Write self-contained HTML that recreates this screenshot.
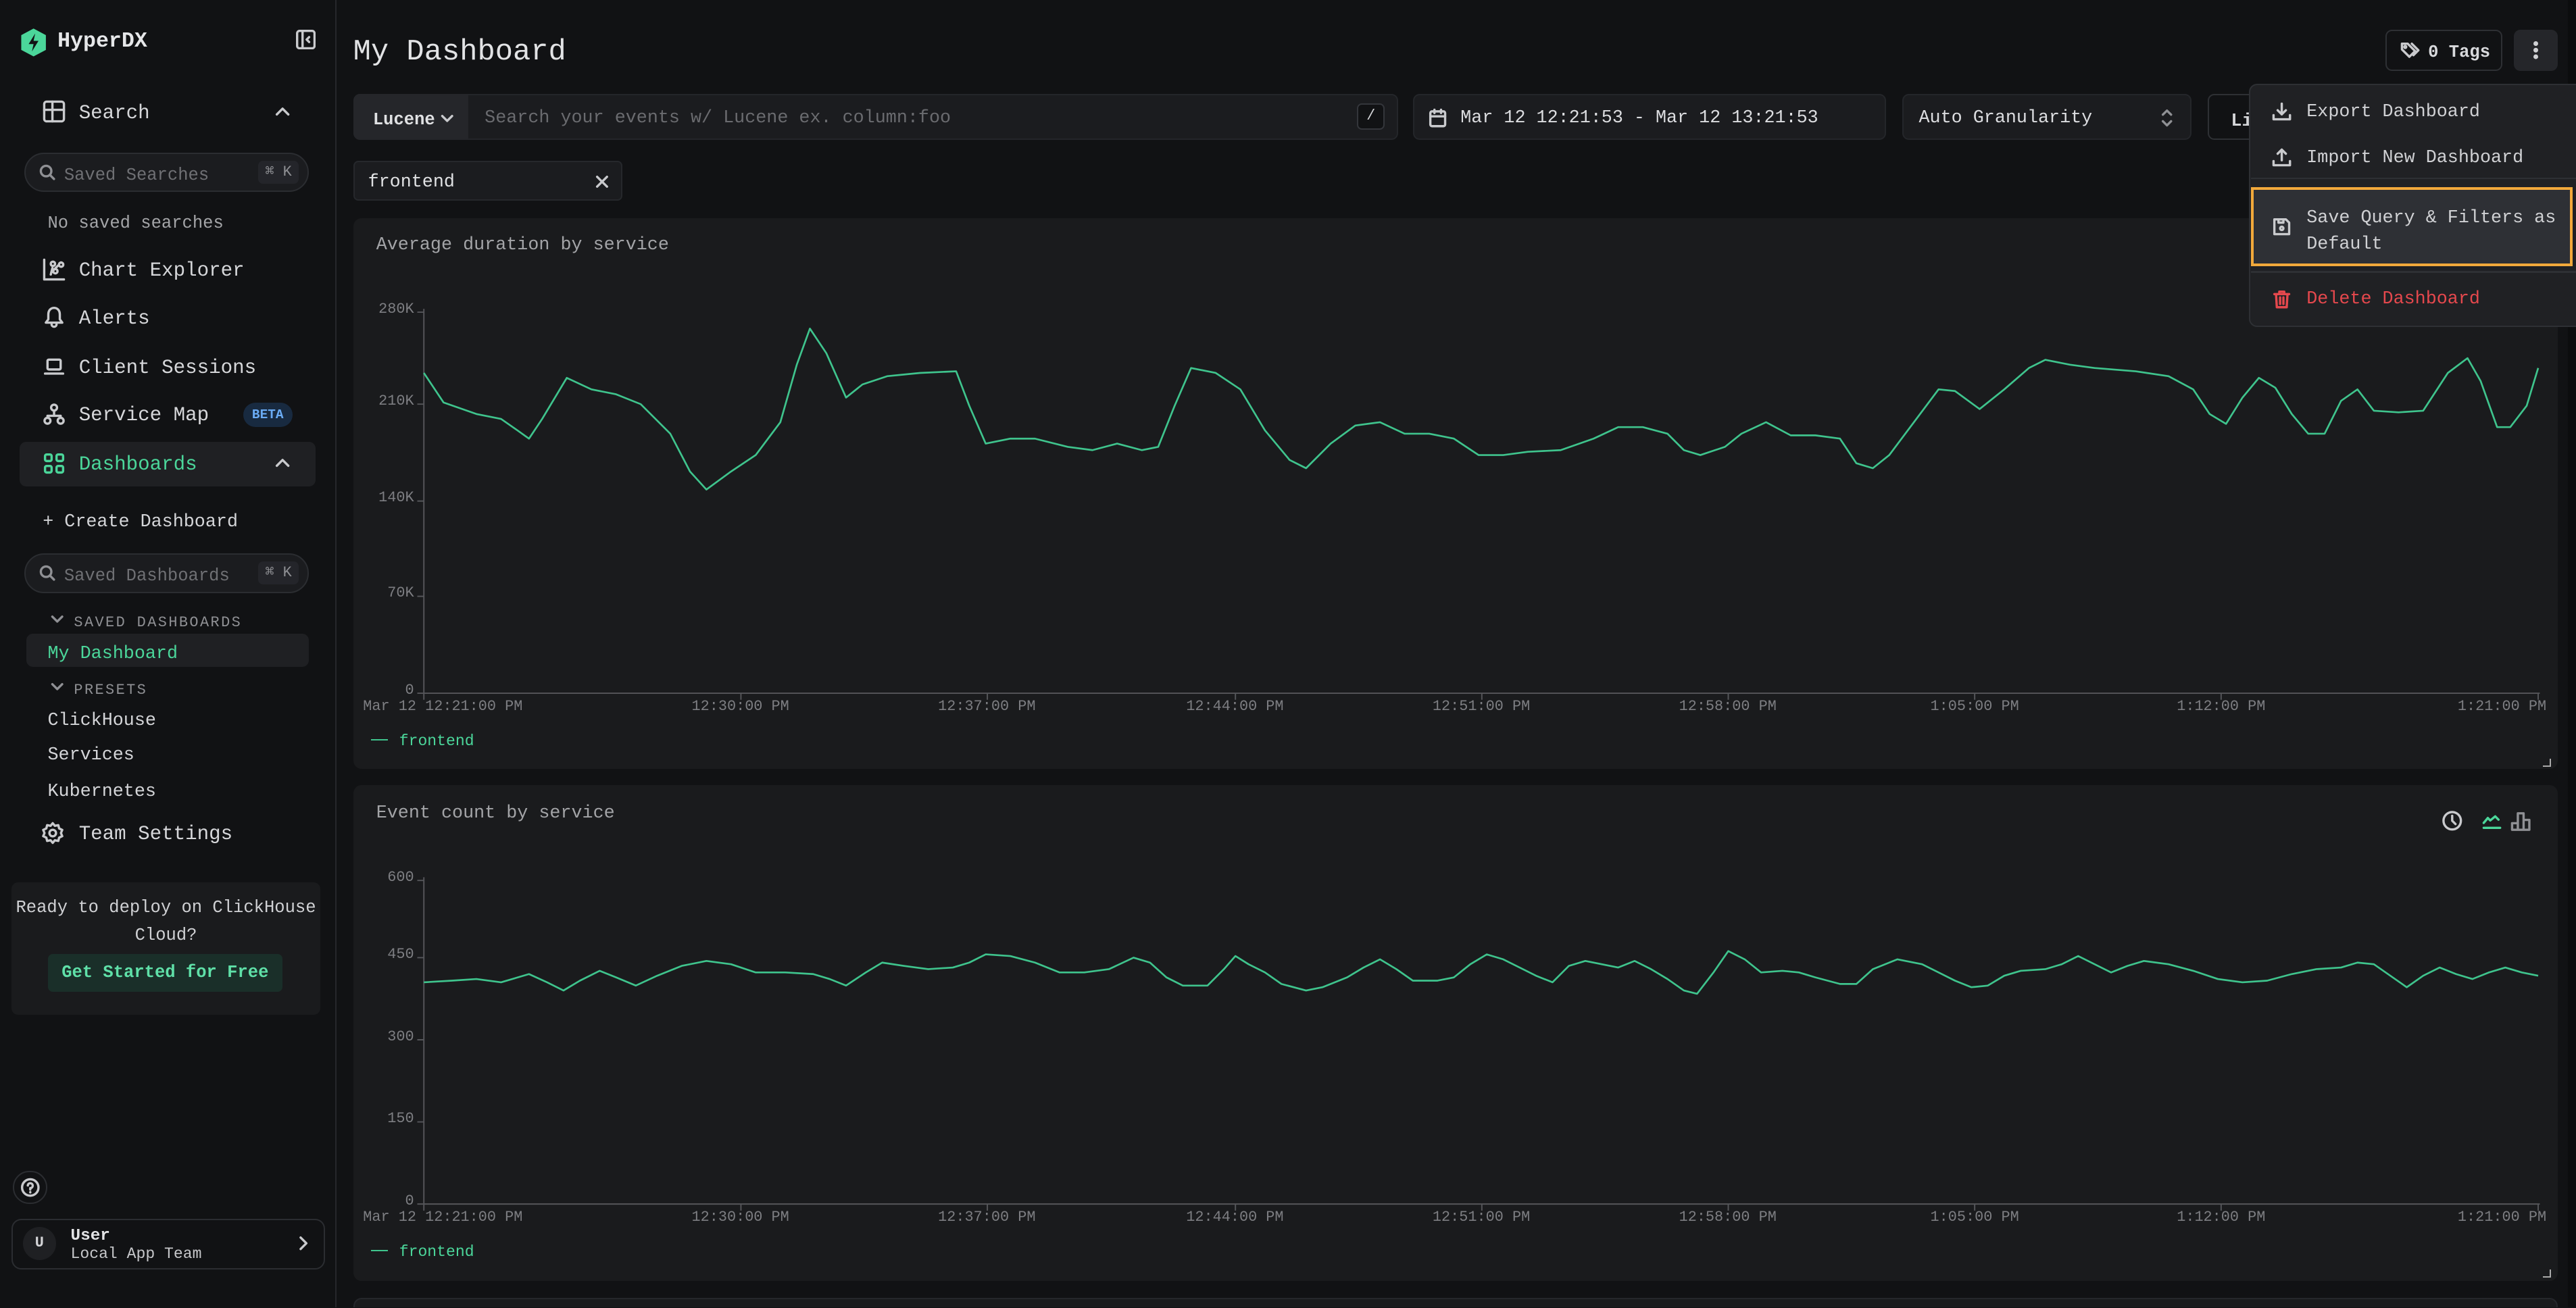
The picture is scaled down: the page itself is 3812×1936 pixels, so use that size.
<!DOCTYPE html>
<html><head><meta charset="utf-8"><style>
*{box-sizing:border-box;margin:0;padding:0}
html,body{width:3812px;height:1936px;overflow:hidden;background:#111214}
#w{position:absolute;left:0;top:0;width:1568px;height:796px;zoom:2.4311;background:#111214;font-family:"Liberation Mono",monospace;color:#d4d5d8;overflow:hidden}
.a{position:absolute;white-space:nowrap}
.a:not([style*="background"]):not([style*="border"]){margin-top:2px}
.t{font-size:11.5px;line-height:14px}
.nav{font-size:12px;color:#d6d7da}
.ic{position:absolute;fill:none;stroke:#c9cacd;stroke-width:1.4;stroke-linecap:round;stroke-linejoin:round}
.panel{position:absolute;background:#1a1b1d;border-radius:5px}
.ax{font-size:9px;color:#7d7e82;position:absolute;white-space:nowrap}
.muted{color:#8f9094}
</style></head><body><div id="w">
<!-- sidebar -->
<div class="a" style="left:204px;top:0;width:1px;height:796px;background:#26272b"></div>
<svg class="a" style="left:12px;top:15px" width="17" height="18" viewBox="0 0 17 18"><path d="M8.5 0.5L16 4.5V13.5L8.5 17.5L1 13.5V4.5Z" fill="#4bd69a"/><path d="M9.5 3.5L5.5 10H8.5L7.5 14.5L11.5 8H8.5Z" fill="#111214"/></svg>
<div class="a" style="left:35px;top:16px;font-size:13px;font-weight:bold;color:#e6e7e9">HyperDX</div>
<svg class="ic" style="left:180px;top:18px" width="12" height="12" viewBox="0 0 12 12"><rect x="0.7" y="0.7" width="10.6" height="10.6" rx="1.5"/><path d="M4 1V11M8 4.5L6.5 6L8 7.5"/></svg>

<svg class="ic" style="left:26px;top:61px" width="14" height="14" viewBox="0 0 14 14"><rect x="1" y="1" width="12" height="12" rx="1.5"/><path d="M1 6H13M6 1V13"/></svg>
<div class="a nav" style="left:48px;top:60px">Search</div>
<svg class="ic" style="left:167px;top:64px" width="10" height="8" viewBox="0 0 10 8"><path d="M1.5 5.5L5 2L8.5 5.5"/></svg>
<div class="a" style="left:15px;top:93px;width:173px;height:24px;border-radius:12px;background:#1b1c1f;border:1px solid #2b2d31"></div>
<svg class="ic" style="left:24px;top:100px;stroke:#8f9094" width="10" height="10" viewBox="0 0 10 10"><circle cx="4.2" cy="4.2" r="3.2"/><path d="M6.6 6.6L9 9"/></svg>
<div class="a t muted" style="left:39px;top:98px;font-size:10.5px;color:#6f7074">Saved Searches</div>
<div class="a" style="left:157px;top:98px;width:25px;height:14px;background:#24252a;border-radius:3px;font-size:9px;color:#8f9094;text-align:center;line-height:14px">⌘ K</div>
<div class="a t muted" style="left:29px;top:127px;font-size:10.5px;color:#a4a5a8">No saved searches</div>

<svg class="ic" style="left:26px;top:157px" width="14" height="14" viewBox="0 0 14 14"><path d="M1 1V13H13M5 10L6 6M5 3.5A1.3 1.3 0 1 0 5 3.49M10 4A1.3 1.3 0 1 0 10 3.99M6.5 8A1.3 1.3 0 1 0 6.5 7.99M7 7L9.5 4.5"/></svg>
<div class="a nav" style="left:48px;top:156px">Chart Explorer</div>
<svg class="ic" style="left:26px;top:186px" width="14" height="14" viewBox="0 0 14 14"><path d="M7 1.5C4.8 1.5 3.5 3.3 3.5 5.5V8.5L2 10.5H12L10.5 8.5V5.5C10.5 3.3 9.2 1.5 7 1.5ZM5.5 11.5A1.5 1.5 0 0 0 8.5 11.5"/></svg>
<div class="a nav" style="left:48px;top:185px">Alerts</div>
<svg class="ic" style="left:26px;top:216px" width="14" height="14" viewBox="0 0 14 14"><rect x="3" y="3" width="8" height="6" rx="0.8"/><path d="M1.5 11.5H12.5"/></svg>
<div class="a nav" style="left:48px;top:215px">Client Sessions</div>
<svg class="ic" style="left:26px;top:245px" width="14" height="14" viewBox="0 0 14 14"><circle cx="7" cy="3" r="1.8"/><circle cx="3" cy="11" r="1.8"/><circle cx="11" cy="11" r="1.8"/><path d="M7 5V7M3 9.2V8H11V9.2"/></svg>
<div class="a nav" style="left:48px;top:244px">Service Map</div>
<div class="a" style="left:148px;top:245px;width:30px;height:15px;border-radius:8px;background:#182a40;color:#6aabf4;font-size:8px;font-weight:bold;text-align:center;line-height:15px">BETA</div>

<div class="a" style="left:12px;top:269px;width:180px;height:27px;border-radius:4px;background:#1f2023"></div>
<svg class="ic" style="left:26px;top:275px;stroke:#4bd69a" width="14" height="14" viewBox="0 0 14 14"><rect x="1.5" y="1.5" width="4" height="4" rx="1"/><rect x="8.5" y="1.5" width="4" height="4" rx="1"/><rect x="1.5" y="8.5" width="4" height="4" rx="1"/><rect x="8.5" y="8.5" width="4" height="4" rx="1"/></svg>
<div class="a nav" style="left:48px;top:274px;color:#4bd69a">Dashboards</div>
<svg class="ic" style="left:167px;top:278px" width="10" height="8" viewBox="0 0 10 8"><path d="M1.5 5.5L5 2L8.5 5.5"/></svg>
<div class="a t" style="left:26px;top:309px;font-size:11px">+ Create Dashboard</div>
<div class="a" style="left:15px;top:337px;width:173px;height:24px;border-radius:12px;background:#1b1c1f;border:1px solid #2b2d31"></div>
<svg class="ic" style="left:24px;top:344px;stroke:#8f9094" width="10" height="10" viewBox="0 0 10 10"><circle cx="4.2" cy="4.2" r="3.2"/><path d="M6.6 6.6L9 9"/></svg>
<div class="a t" style="left:39px;top:342px;font-size:10.5px;color:#6f7074">Saved Dashboards</div>
<div class="a" style="left:157px;top:342px;width:25px;height:14px;background:#24252a;border-radius:3px;font-size:9px;color:#8f9094;text-align:center;line-height:14px">⌘ K</div>
<svg class="ic" style="left:31px;top:374px;stroke:#8f9094" width="8" height="6" viewBox="0 0 8 6"><path d="M1 1.5L4 4.5L7 1.5"/></svg>
<div class="a" style="left:45px;top:372px;font-size:9px;letter-spacing:1px;color:#8f9094">SAVED DASHBOARDS</div>
<div class="a" style="left:16px;top:386px;width:172px;height:20px;border-radius:4px;background:#1f2023"></div>
<div class="a t" style="left:29px;top:389px;font-size:11px;color:#4bd69a">My Dashboard</div>
<svg class="ic" style="left:31px;top:415px;stroke:#8f9094" width="8" height="6" viewBox="0 0 8 6"><path d="M1 1.5L4 4.5L7 1.5"/></svg>
<div class="a" style="left:45px;top:413px;font-size:9px;letter-spacing:1px;color:#8f9094">PRESETS</div>
<div class="a t" style="left:29px;top:430px;font-size:11px">ClickHouse</div>
<div class="a t" style="left:29px;top:451px;font-size:11px">Services</div>
<div class="a t" style="left:29px;top:473px;font-size:11px">Kubernetes</div>
<svg class="ic" style="left:25px;top:500px" width="14" height="14" viewBox="0 0 14 14"><circle cx="7" cy="7" r="2"/><path d="M7 1L8.3 2.6L10.4 2.2L10.9 4.2L12.8 5.1L12 7L12.8 8.9L10.9 9.8L10.4 11.8L8.3 11.4L7 13L5.7 11.4L3.6 11.8L3.1 9.8L1.2 8.9L2 7L1.2 5.1L3.1 4.2L3.6 2.2L5.7 2.6Z"/></svg>
<div class="a nav" style="left:48px;top:499px">Team Settings</div>

<div class="a" style="left:7px;top:537px;width:188px;height:81px;border-radius:4px;background:#1a1b1d"></div>
<div class="a" style="left:7px;top:542px;width:188px;text-align:center;font-size:10.5px;line-height:17px;white-space:normal;color:#d0d1d4">Ready to deploy on ClickHouse Cloud?</div>
<div class="a" style="left:29px;top:581px;width:143px;height:23px;border-radius:3px;background:#1a2f29;color:#5fe0a8;font-size:10.5px;font-weight:bold;text-align:center;line-height:23px">Get Started for Free</div>

<div class="a" style="left:8px;top:713px;width:21px;height:20px;border-radius:10px;border:1px solid #2b2d31"></div>
<svg class="ic" style="left:12px;top:717px" width="13" height="12" viewBox="0 0 13 12"><circle cx="6.5" cy="6" r="5"/><path d="M5 4.8A1.5 1.5 0 1 1 6.5 6.4V7.3M6.5 8.9V9"/></svg>
<div class="a" style="left:7px;top:742px;width:191px;height:31px;border-radius:6px;border:1px solid #2b2d31"></div>
<div class="a" style="left:14px;top:747px;width:20px;height:20px;border-radius:10px;background:#1f2023;font-size:9px;font-weight:bold;text-align:center;line-height:20px">U</div>
<div class="a" style="left:43px;top:745px;font-size:10px;font-weight:bold;color:#e2e3e5">User</div>
<div class="a" style="left:43px;top:756px;font-size:9.5px;color:#c6c7ca">Local App Team</div>
<svg class="ic" style="left:181px;top:752px" width="8" height="10" viewBox="0 0 8 10"><path d="M2 1.5L5.5 5L2 8.5"/></svg>

<!-- main header -->
<div class="a" style="left:215px;top:20px;font-size:18px;color:#e2e3e5">My Dashboard</div>
<div class="a" style="left:1452px;top:18px;width:71px;height:25px;border-radius:4px;border:1px solid #2e3034"></div>
<svg class="ic" style="left:1461px;top:25px" width="12" height="11" viewBox="0 0 12 11"><path d="M1 1.5V5L5.5 9.5L9 6L4.5 1.5ZM7 1.5L11 5.5L8 8.5"/><circle cx="3" cy="3.5" r="0.6"/></svg>
<div class="a" style="left:1478px;top:24px;font-size:10.5px;font-weight:bold;color:#d8d9dc">0 Tags</div>
<div class="a" style="left:1530px;top:18px;width:27px;height:25px;border-radius:4px;background:#25262a"></div>
<div class="a" style="left:1542px;top:25px;width:3px;height:3px;border-radius:2px;background:#d0d1d4;box-shadow:0 4px 0 #d0d1d4,0 8px 0 #d0d1d4"></div>

<div class="a" style="left:215px;top:57px;width:636px;height:28px;border-radius:4px;background:#1b1c1f;border:1px solid #24262a"></div>
<div class="a" style="left:215px;top:57px;width:70px;height:28px;border-radius:4px 0 0 4px;background:#25262a"></div>
<div class="a" style="left:227px;top:65px;font-size:10.5px;font-weight:bold;color:#e0e1e3">Lucene</div>
<svg class="ic" style="left:268px;top:69px" width="8" height="6" viewBox="0 0 8 6"><path d="M1 1.5L4 4.5L7 1.5"/></svg>
<div class="a" style="left:295px;top:64px;font-size:11px;color:#6a6b6f">Search your events w/ Lucene ex. column:foo</div>
<div class="a" style="left:826px;top:63px;width:17px;height:16px;border-radius:3px;background:#111214;border:1px solid #34363b;font-size:9px;text-align:center;line-height:14px">/</div>
<div class="a" style="left:860px;top:57px;width:288px;height:28px;border-radius:4px;background:#1b1c1f;border:1px solid #24262a"></div>
<svg class="ic" style="left:869px;top:66px" width="12" height="12" viewBox="0 0 12 12"><rect x="1.5" y="2" width="9" height="9" rx="1"/><path d="M1.5 5H10.5M4 1V3M8 1V3"/></svg>
<div class="a" style="left:889px;top:64px;font-size:11px;color:#dcdde0">Mar 12 12:21:53 - Mar 12 13:21:53</div>
<div class="a" style="left:1158px;top:57px;width:176px;height:28px;border-radius:4px;background:#1b1c1f;border:1px solid #24262a"></div>
<div class="a" style="left:1168px;top:64px;font-size:11px;color:#dcdde0">Auto Granularity</div>
<svg class="ic" style="left:1315px;top:66px;stroke:#8f9094" width="8" height="12" viewBox="0 0 8 12"><path d="M1.5 4L4 1.5L6.5 4M1.5 8L4 10.5L6.5 8"/></svg>
<div class="a" style="left:1344px;top:57px;width:60px;height:28px;border-radius:4px;border:1px solid #2e3034"></div>
<div class="a" style="left:1358px;top:66px;font-size:11px;font-weight:bold">Li</div>

<div class="a" style="left:215px;top:98px;width:164px;height:24px;border-radius:3px;background:#1b1c1f;border:1px solid #26282c"></div>
<div class="a" style="left:224px;top:103px;font-size:11px;color:#e0e1e3">frontend</div>
<svg class="ic" style="left:362px;top:106px" width="9" height="9" viewBox="0 0 9 9"><path d="M1.5 1.5L7.5 7.5M7.5 1.5L1.5 7.5"/></svg>

<!-- panels -->
<div class="panel" style="left:215px;top:133px;width:1342px;height:335px"></div>
<div class="panel" style="left:215px;top:478px;width:1342px;height:302px"></div>
<div class="panel" style="left:215px;top:790px;width:1342px;height:20px;border:1px solid #25272b"></div>

<div class="a" style="left:229px;top:141px;font-size:11px;color:#a3a4a7">Average duration by service</div>
<svg class="a" style="left:0;top:0" width="1568" height="796" viewBox="0 0 1568 796">
<g stroke="#55565a" stroke-width="0.8" fill="none">
<path d="M258 186V420H1546M254 188H258M254 244H258M254 303H258M254 361H258M254 420H258"/>
<path d="M258 420V424M451 420V424M601 420V424M752 420V424M902 420V424M1052 420V424M1202 420V424M1352 420V424M1545 420V424"/>
<path d="M258 532V731H1546M254 534H258M254 581H258M254 631H258M254 681H258M254 731H258"/>
<path d="M258 731V735M451 731V735M601 731V735M752 731V735M902 731V735M1052 731V735M1202 731V735M1352 731V735M1545 731V735"/>
</g>
<polyline fill="none" stroke="#3fc48d" stroke-width="1.1" stroke-linejoin="round" points="258,225 270,243 290,250 305,253 315,260 322,265 330,253 345,228 360,235 375,238 390,244 408,262 420,285 430,296 445,285 460,275 475,255 485,220 493,198 503,213 515,240 525,232 540,227 560,225 582,224 590,245 600,268 615,265 630,265 650,270 665,272 680,268 695,272 705,270 715,245 725,222 740,225 755,235 770,260 785,278 795,283 810,268 825,257 840,255 855,262 870,262 885,265 900,275 915,275 930,273 950,272 970,265 985,258 1000,258 1015,262 1025,272 1035,275 1050,270 1060,262 1075,255 1090,263 1105,263 1120,265 1130,280 1140,283 1150,275 1165,255 1180,235 1190,236 1205,247 1220,235 1235,222 1245,217 1260,220 1275,222 1300,224 1320,227 1335,235 1345,250 1355,256 1365,240 1375,228 1385,234 1395,250 1405,262 1415,262 1425,242 1435,235 1445,248 1460,249 1475,248 1490,225 1502,216 1510,230 1520,258 1528,258 1538,245 1545,222"/>
<polyline fill="none" stroke="#3fc48d" stroke-width="1.1" stroke-linejoin="round" points="258,596 275,595 290,594 305,596 322,591 333,596 343,601 353,595 365,589 375,593 387,598 400,592 415,586 430,583 445,585 460,590 478,590 495,591 505,594 515,598 527,590 537,584 550,586 565,588 580,587 590,584 600,579 615,580 630,584 645,590 660,590 675,588 690,581 700,584 710,593 720,598 735,598 745,588 752,580 760,585 770,590 780,597 795,601 805,599 820,593 830,587 840,582 850,588 860,595 875,595 885,593 895,585 905,579 915,582 925,587 935,592 945,596 955,586 965,583 975,585 985,587 995,583 1005,588 1015,594 1025,601 1033,603 1043,590 1052,577 1062,582 1072,590 1085,589 1095,590 1105,593 1120,597 1130,597 1140,588 1155,582 1170,585 1180,590 1190,595 1200,599 1210,598 1220,592 1230,589 1245,588 1255,585 1265,580 1275,585 1285,590 1295,586 1305,583 1320,585 1335,589 1350,594 1365,596 1380,595 1395,591 1410,588 1425,587 1435,584 1445,585 1455,592 1465,599 1475,592 1485,587 1495,591 1505,594 1515,590 1525,587 1535,590 1545,592"/>
</svg>
<div class="ax" style="left:200px;top:183px;width:52px;text-align:right">280K</div>
<div class="ax" style="left:200px;top:239px;width:52px;text-align:right">210K</div>
<div class="ax" style="left:200px;top:298px;width:52px;text-align:right">140K</div>
<div class="ax" style="left:200px;top:356px;width:52px;text-align:right">70K</div>
<div class="ax" style="left:200px;top:415px;width:52px;text-align:right">0</div>
<div class="ax" style="left:221px;top:425px">Mar 12 12:21:00 PM</div>
<div class="ax" style="left:421px;top:425px">12:30:00 PM</div>
<div class="ax" style="left:571px;top:425px">12:37:00 PM</div>
<div class="ax" style="left:722px;top:425px">12:44:00 PM</div>
<div class="ax" style="left:872px;top:425px">12:51:00 PM</div>
<div class="ax" style="left:1022px;top:425px">12:58:00 PM</div>
<div class="ax" style="left:1175px;top:425px">1:05:00 PM</div>
<div class="ax" style="left:1325px;top:425px">1:12:00 PM</div>
<div class="ax" style="left:1496px;top:425px">1:21:00 PM</div>
<div class="a" style="left:226px;top:450px;width:10px;height:1px;background:#3fc48d"></div>
<div class="a" style="left:243px;top:444px;font-size:9.5px;color:#4bd69a">frontend</div>
<div class="a" style="left:1548px;top:462px;width:5px;height:5px;border-right:1px solid #aaa;border-bottom:1px solid #aaa"></div>

<div class="a" style="left:229px;top:487px;font-size:11px;color:#a3a4a7">Event count by service</div>
<svg class="ic" style="left:1486px;top:493px" width="13" height="13" viewBox="0 0 13 13"><circle cx="6.5" cy="6.5" r="5.3"/><path d="M6.5 3.5V6.5L8.5 8.5"/></svg>
<svg class="ic" style="left:1511px;top:494px;stroke:#4bd69a" width="13" height="12" viewBox="0 0 13 12"><path d="M1 7L3.5 4L5 5.5L8 3L10 5M1 10H11"/></svg>
<svg class="ic" style="left:1528px;top:493px;stroke:#8f9094" width="13" height="13" viewBox="0 0 13 13"><path d="M1 12V8H4.5V12ZM4.5 12V2H8V12ZM8 12V6H11.5V12Z"/></svg>
<div class="ax" style="left:200px;top:529px;width:52px;text-align:right">600</div>
<div class="ax" style="left:200px;top:576px;width:52px;text-align:right">450</div>
<div class="ax" style="left:200px;top:626px;width:52px;text-align:right">300</div>
<div class="ax" style="left:200px;top:676px;width:52px;text-align:right">150</div>
<div class="ax" style="left:200px;top:726px;width:52px;text-align:right">0</div>
<div class="ax" style="left:221px;top:736px">Mar 12 12:21:00 PM</div>
<div class="ax" style="left:421px;top:736px">12:30:00 PM</div>
<div class="ax" style="left:571px;top:736px">12:37:00 PM</div>
<div class="ax" style="left:722px;top:736px">12:44:00 PM</div>
<div class="ax" style="left:872px;top:736px">12:51:00 PM</div>
<div class="ax" style="left:1022px;top:736px">12:58:00 PM</div>
<div class="ax" style="left:1175px;top:736px">1:05:00 PM</div>
<div class="ax" style="left:1325px;top:736px">1:12:00 PM</div>
<div class="ax" style="left:1496px;top:736px">1:21:00 PM</div>
<div class="a" style="left:226px;top:761px;width:10px;height:1px;background:#3fc48d"></div>
<div class="a" style="left:243px;top:755px;font-size:9.5px;color:#4bd69a">frontend</div>
<div class="a" style="left:1548px;top:773px;width:5px;height:5px;border-right:1px solid #aaa;border-bottom:1px solid #aaa"></div>
<div class="a" style="left:1563px;top:0;width:5px;height:796px;background:#0c0d0e"></div>

<!-- menu -->
<div class="a" style="left:1369px;top:51px;width:210px;height:148px;border-radius:5px;background:#202124;border:1px solid #2e3034"></div>
<svg class="ic" style="left:1383px;top:62px" width="12" height="12" viewBox="0 0 12 12"><path d="M1 8V10.5H11V8M6 1V7.5M3.5 5L6 7.5L8.5 5"/></svg>
<div class="a" style="left:1404px;top:60px;font-size:11px;color:#d0d1d4">Export Dashboard</div>
<svg class="ic" style="left:1383px;top:90px" width="12" height="12" viewBox="0 0 12 12"><path d="M1 8V10.5H11V8M6 7.5V1M3.5 3.5L6 1L8.5 3.5"/></svg>
<div class="a" style="left:1404px;top:88px;font-size:11px;color:#d0d1d4">Import New Dashboard</div>
<div class="a" style="left:1370px;top:108px;width:198px;height:1px;background:#2e3034"></div>
<div class="a" style="left:1370px;top:114px;width:196px;height:48px;background:#2e3035;border:2px solid #f2a93b"></div>
<svg class="ic" style="left:1383px;top:132px" width="12" height="12" viewBox="0 0 12 12"><path d="M1.5 1.5H8.5L10.5 3.5V10.5H1.5ZM4 1.5V3.5H7V1.5"/><circle cx="6" cy="7" r="1"/></svg>
<div class="a" style="left:1404px;top:123px;font-size:11px;line-height:16px;color:#d0d1d4">Save Query &amp; Filters as<br>Default</div>
<div class="a" style="left:1370px;top:165px;width:198px;height:1px;background:#2e3034"></div>
<svg class="ic" style="left:1383px;top:176px;stroke:#e5484d" width="12" height="12" viewBox="0 0 12 12"><path d="M1.5 3H10.5M4.5 3V1.5H7.5V3M2.5 3L3 11H9L9.5 3M5 5V9M7 5V9"/></svg>
<div class="a" style="left:1404px;top:174px;font-size:11px;color:#e5484d">Delete Dashboard</div>
</div></body></html>
